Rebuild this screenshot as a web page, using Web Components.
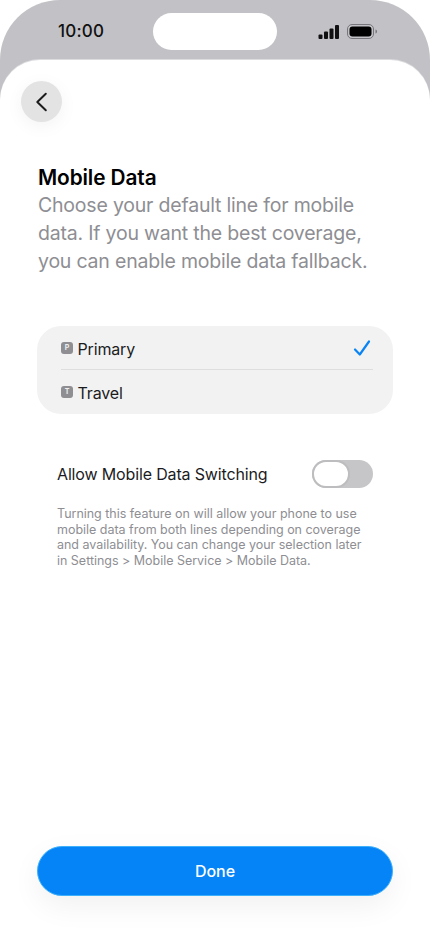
<!doctype html>
<html><head><meta charset="utf-8"><style>
html,body{margin:0;padding:0;background:#fff}
body{font-family:Inter,"Liberation Sans",sans-serif}
</style></head><body>
<template id="t-status"><style>
:host{display:flex;height:60px;box-sizing:border-box;align-items:flex-start;color:#111}
.time{width:153px;box-sizing:border-box;padding:19px 0 0 58px;font:500 17px/24px Inter,sans-serif;letter-spacing:.2px}
.island{width:124px;height:37px;margin-top:13px;border-radius:19px;background:#fff}
.icons{display:flex;align-items:center;gap:7px;margin:24px 0 0 41px}
svg{display:block}
</style><div class="time"><slot></slot></div><div class="island"></div>
<div class="icons"><svg width="22" height="14" viewBox="0 0 22 14"><g fill="#111"><rect x="0.5" y="9.5" width="4" height="4.5" rx="1"/><rect x="6" y="6.5" width="4" height="7.5" rx="1"/><rect x="11.5" y="3.5" width="4" height="10.5" rx="1"/><rect x="17" y="0" width="4" height="14" rx="1"/></g></svg>
<svg width="31" height="15" viewBox="0 0 31 15"><rect x=".5" y=".5" width="26" height="14" rx="4.5" fill="none" stroke="#77777b"/><rect x="2.5" y="2.5" width="22" height="10" rx="3" fill="#000"/><path d="M28.5 5.5c1 .3 1.5 1 1.5 2s-.5 1.700-1.500 2z" fill="#77777b"/></svg></div></template>

<template id="t-back"><style>
:host{display:flex;width:41px;height:41px;border-radius:50%;background:#e3e3e3;align-items:center;justify-content:center;box-shadow:0 4px 18px rgba(0,0,0,.05);margin:21px 0 0 21px}
svg{display:block}
</style><svg width="16" height="24" viewBox="0 0 16 24"><path d="M11.800 3.800 L3.300 12 L11.800 20.200" fill="none" stroke="#1c1c1e" stroke-width="2" stroke-linecap="round" stroke-linejoin="round"/></svg></template>

<template id="t-heading"><style>
:host{display:block;margin:41px 0 0 38px;width:345px}
h1{margin:0;padding-top:1px;font:600 20.800px/27px Inter,sans-serif;color:#000;letter-spacing:-.1px}
p{margin:0;font:400 19.500px/28px Inter,sans-serif;color:#8e8e93;letter-spacing:-.2px}
</style><h1><slot name="title"></slot></h1><p><slot></slot></p></template>

<template id="t-lines"><style>
:host{display:block;margin:51px 37px 0;background:#f2f2f2;border-radius:24px;padding:0 20px 0 24px}
</style><slot></slot></template>

<template id="t-line"><style>
:host{display:flex;align-items:center;height:44px;font:400 16px/20px Inter,sans-serif;letter-spacing:-.15px;color:#1c1c1e}
:host([divider]){box-shadow:inset 0 -1px 0 #dedee0}
.b{width:12px;height:12px;border-radius:3px;background:#8e8e93;color:#eee;font:700 7px/12px Inter,sans-serif;letter-spacing:0;text-align:center;margin-right:4.500px;flex:none}
.t{flex:1;padding-top:1px}
svg{display:none;margin-right:2px}
:host([checked]) svg{display:block}
</style><span class="b" id="b"></span><span class="t"><slot></slot></span>
<svg width="18" height="18" viewBox="0 0 18 18"><path d="M2 10.500 L6.800 15.500 L16 2.500" fill="none" stroke="#0a84f5" stroke-width="2.200" stroke-linecap="round" stroke-linejoin="round"/></svg></template>

<template id="t-switch"><style>
:host{display:flex;align-items:center;justify-content:space-between;margin:46px 57px 0;height:28px;font:400 16px/20px Inter,sans-serif;letter-spacing:-.15px;color:#1c1c1e}
.tr{width:61px;height:28px;border-radius:14px;background:#c6c6c8;position:relative;flex:none}
.k{width:34px;height:24px;border-radius:14px;background:#fff;border:2px solid #bdbdbf;position:absolute;left:0;top:0;box-sizing:content-box}
</style><span><slot></slot></span><span class="tr"><span class="k"></span></span></template>

<template id="t-note"><style>
:host{display:block;margin:18px 57px 0;font:400 12.500px/15.700px Inter,sans-serif;letter-spacing:-.02px;color:#8e8e93}
</style><slot></slot></template>

<template id="t-done"><style>
:host{display:flex;align-items:center;justify-content:center;box-sizing:border-box;height:50px;margin:0 37px 38px;border-radius:25px;background:#0584f7;border:1px solid #3db0fb;color:#fff;font:500 16px/20px Inter,sans-serif;box-shadow:0 10px 30px rgba(0,0,0,.06)}
</style><slot></slot></template>

<template id="t-sheet"><style>
:host{display:flex;flex-direction:column;flex:1;background:#fff;border-radius:40px 40px 0 0;box-shadow:0 -1px 0 #dcdcdf}
.sp{flex:1}
</style><slot></slot><div class="sp"></div><slot name="foot"></slot></template>

<template id="t-phone"><style>
:host{display:flex;flex-direction:column;width:430px;height:934px;overflow:hidden;border-radius:60px 60px 0 0;background:linear-gradient(#c2c1c6 0,#c2c1c6 110px,#fff 135px)}
</style><slot></slot></template>

<phone-frame>
<status-bar>10:00</status-bar>
<sheet-panel>
<back-button></back-button>
<page-heading><span slot="title">Mobile Data</span>Choose your default line for mobile data. If you want the best coverage, you can enable mobile data fallback.</page-heading>
<line-list>
<line-row badge="P" checked divider>Primary</line-row>
<line-row badge="T">Travel</line-row>
</line-list>
<switch-row>Allow Mobile Data Switching</switch-row>
<note-text>Turning this feature on will allow your phone to use mobile data from both lines depending on coverage and availability. You can change your selection later in Settings &gt; Mobile Service &gt; Mobile Data.</note-text>
<done-button slot="foot">Done</done-button>
</sheet-panel>
</phone-frame>
<script>
const reg=(n,id,fn)=>customElements.define(n,class extends HTMLElement{constructor(){super();this.attachShadow({mode:'open'}).appendChild(document.getElementById(id).content.cloneNode(true))}connectedCallback(){fn&&fn(this)}});
reg('phone-frame','t-phone');reg('status-bar','t-status');reg('sheet-panel','t-sheet');reg('back-button','t-back');
reg('page-heading','t-heading');reg('line-list','t-lines');
reg('line-row','t-line',e=>{e.shadowRoot.getElementById('b').textContent=e.getAttribute('badge')});
reg('switch-row','t-switch');reg('note-text','t-note');reg('done-button','t-done');
</script>
</body></html>
